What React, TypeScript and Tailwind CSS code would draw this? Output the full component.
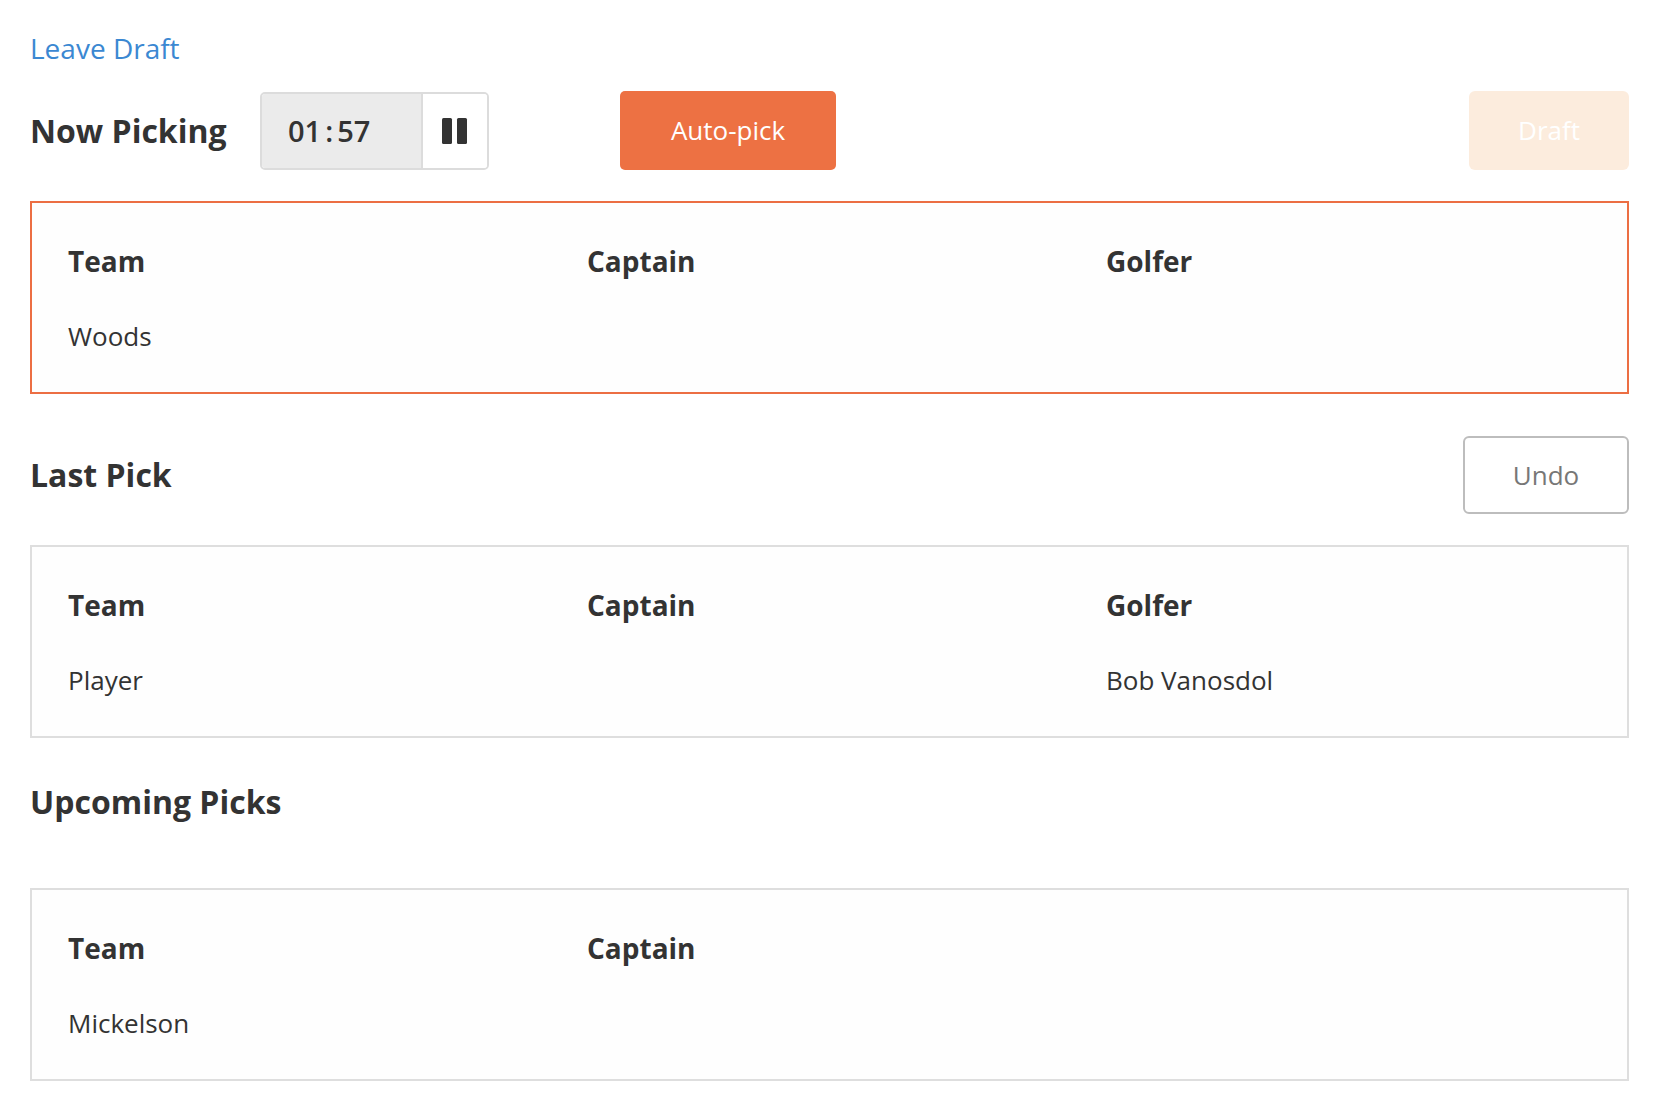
import React from 'react';

const font = { fontFamily: '"Open Sans", Lato, "Noto Sans", sans-serif' };

type Col = { label: string; value?: string };

// Tarjeta con encabezados en columnas y el valor debajo
const PickCard = ({ cols, active }: { cols: Col[]; active?: boolean }) => (
  <div
    className={`h-[193px] border-2 ${active ? 'border-[#ec6e43]' : 'border-[#dedede]'} bg-[#fefefe] pl-[36px] pt-[40px]`}
  >
    <div className="grid grid-cols-[519px_519px_1fr]">
      {cols.map((c) => (
        <div key={c.label} className="flex flex-col">
          <div className="h-[36px] leading-[36px] text-[28px] font-bold text-[#333]">{c.label}</div>
          <div className="mt-[41px] h-[32px] leading-[32px] text-[26px] text-[#333]">{c.value ?? ''}</div>
        </div>
      ))}
    </div>
  </div>
);

export default function App() {
  return (
    <div className="min-h-screen bg-white pl-[30px] pr-[29px] pt-[32px]" style={font}>
      <a href="#" className="block h-[32px] leading-[32px] text-[28px] text-[#3b88d2]">
        Leave Draft
      </a>

      {/* Cabecera: quién elige, reloj y acciones */}
      <div className="mt-[27px] flex h-[79px] items-center">
        <h2 className="w-[230px] text-[32px] font-bold text-[#333]">Now Picking</h2>
        <div className="flex h-[78px] w-[229px] overflow-hidden rounded-[5px] border-2 border-[#dcdcdc]">
          <div className="flex w-[159px] items-center bg-[#ebebeb] pl-[26px] text-[29px] font-semibold text-[#333]">
            01<span className="mx-[4px]">:</span>57
          </div>
          <button className="flex flex-1 items-center justify-center border-l-2 border-[#dcdcdc] bg-white">
            <svg width="27" height="26" viewBox="0 0 27 26">
              <rect x="0" y="0" width="10" height="26" rx="1.5" fill="#333" />
              <rect x="15" y="0" width="10" height="26" rx="1.5" fill="#333" />
            </svg>
          </button>
        </div>
        <button className="ml-[131px] h-[79px] w-[216px] rounded-[5px] bg-[#ed7143] text-[26px] text-white">
          Auto-pick
        </button>
        <div className="flex-1" />
        <button className="h-[79px] w-[160px] rounded-[6px] bg-[#fcecdd] text-[26px] text-white">Draft</button>
      </div>

      <div className="mt-[31px]">
        <PickCard active cols={[{ label: 'Team', value: 'Woods' }, { label: 'Captain' }, { label: 'Golfer' }]} />
      </div>

      <div className="mt-[42px] flex h-[78px] items-center justify-between">
        <h2 className="text-[32px] font-bold text-[#333]">Last Pick</h2>
        <button className="h-[78px] w-[166px] rounded-[6px] border-2 border-[#bdbdbd] bg-white text-[26px] text-[#777]">
          Undo
        </button>
      </div>

      <div className="mt-[31px]">
        <PickCard cols={[{ label: 'Team', value: 'Player' }, { label: 'Captain' }, { label: 'Golfer', value: 'Bob Vanosdol' }]} />
      </div>

      <h2 className="mt-[44px] h-[40px] leading-[40px] text-[32px] font-bold text-[#333]">Upcoming Picks</h2>

      <div className="mt-[66px]">
        <PickCard cols={[{ label: 'Team', value: 'Mickelson' }, { label: 'Captain' }]} />
      </div>
    </div>
  );
}
